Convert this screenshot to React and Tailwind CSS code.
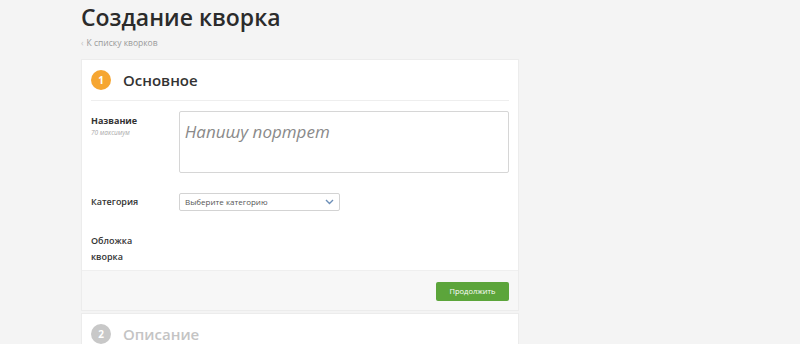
export default function App() {
  return (
    <div
      className="w-[800px] h-[344px] overflow-hidden bg-[#f4f4f4] pl-[81px]"
      style={{ fontFamily: '"Open Sans", "Noto Sans", sans-serif' }}
    >
      <h1 className="pt-[3px] text-[23px] leading-[28px] font-semibold text-[#2b2b2b]">
        Создание кворка
      </h1>
      <div className="mt-[6px] text-[8.5px] leading-[12px] text-[#9a9a9a]">
        <span className="mr-[3px] text-[#c4c4c4]">‹</span>К списку кворков
      </div>

      <div className="mt-[10px] w-[438px] bg-white border border-[#ececec]">
        <div className="mx-[9px] h-[41px] flex items-center border-b border-[#eeeeee]">
          <div className="w-[20px] h-[20px] rounded-full bg-[#f6a631] flex items-center justify-center text-white text-[10px] font-bold">
            1
          </div>
          <div className="ml-[12px] text-[15px] font-semibold text-[#333]">Основное</div>
        </div>

        <div className="px-[9px] pt-[10px]">
          <div className="flex">
            <div className="w-[88px] pt-[4px]">
              <div className="text-[9px] leading-[12px] font-bold text-[#333]">Название</div>
              <div className="text-[6.5px] leading-[12px] italic text-[#aaa]">70 максимум</div>
            </div>
            <div className="w-[331px] h-[62px] border border-[#d6d6d6] rounded-[2px] px-[5px] pt-[7px] text-[17px] italic text-[#8a8a8a]">
              Напишу портрет
            </div>
          </div>

          <div className="flex items-center mt-[20px]">
            <div className="w-[88px] text-[9px] font-semibold text-[#333]">Категория</div>
            <div className="w-[161px] h-[18px] border border-[#d3d3d3] rounded-[2px] flex items-center justify-between px-[5px] text-[8px] text-[#555]">
              <span>Выберите категорию</span>
              <svg width="9" height="6" viewBox="0 0 9 6">
                <path d="M1 1 L4.5 4.5 L8 1" fill="none" stroke="#6d8fb8" strokeWidth="1.4" />
              </svg>
            </div>
          </div>

          <div className="mt-[22px] pb-[5px] text-[9px] leading-[16px] font-semibold text-[#333]">
            Обложка
            <br />
            кворка
          </div>
        </div>

        <div className="h-[40px] bg-[#f7f7f7] border-t border-[#efefef] flex items-center justify-end pr-[9px] pt-[2px]">
          <button className="w-[73px] h-[19px] rounded-[2px] bg-[#5ca53b] text-white text-[7.5px] leading-none">
            Продолжить
          </button>
        </div>
      </div>

      <div className="mt-[2px] w-[438px] bg-white border border-[#ececec]">
        <div className="mx-[9px] h-[40px] flex items-center">
          <div className="w-[20px] h-[20px] rounded-full bg-[#c8c8c8] flex items-center justify-center text-white text-[10px] font-bold">
            2
          </div>
          <div className="ml-[12px] text-[15px] font-semibold text-[#c4c4c4]">Описание</div>
        </div>
      </div>
    </div>
  );
}
